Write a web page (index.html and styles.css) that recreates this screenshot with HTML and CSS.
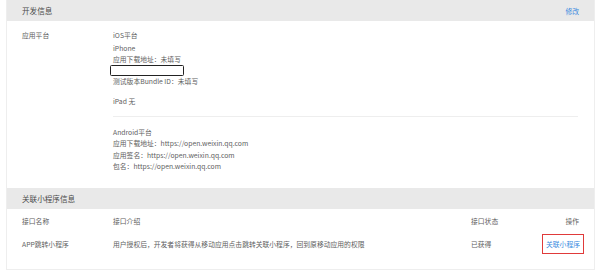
FILE: index.html
```html
<!DOCTYPE html>
<html lang="zh-CN">
<head>
<meta charset="utf-8">
<title>开发信息</title>
<link rel="stylesheet" href="styles.css">
</head>
<body>
<div class="card">
  <div class="section-head">
    <span class="section-title">开发信息</span>
    <a class="link">修改</a>
  </div>
  <div class="dev-body">
    <div class="label">应用平台</div>
    <div class="platforms">
      <div class="ios">
        <div class="line">iOS平台</div>
        <div class="line gap2">iPhone</div>
        <div class="line">应用下载地址：未填写</div>
        <div class="redact"></div>
        <div class="line">测试版本Bundle ID：未填写</div>
        <div class="line ipad">iPad 无</div>
      </div>
      <div class="divider"></div>
      <div class="android">
        <div class="line">Android平台</div>
        <div class="line tight">应用下载地址：https://open.weixin.qq.com</div>
        <div class="line tight">应用签名：https://open.weixin.qq.com</div>
        <div class="line tight">包名：https://open.weixin.qq.com</div>
      </div>
    </div>
  </div>
  <div class="section-head">
    <span class="section-title">关联小程序信息</span>
  </div>
  <div class="table">
    <div class="row head">
      <div>接口名称</div>
      <div>接口介绍</div>
      <div>接口状态</div>
      <div class="act">操作</div>
    </div>
    <div class="row">
      <div>APP跳转小程序</div>
      <div>用户授权后，开发者将获得从移动应用点击跳转关联小程序，回到原移动应用的权限</div>
      <div>已获得</div>
      <div class="act"><a class="link boxed">关联小程序</a></div>
    </div>
  </div>
</div>
</body>
</html>
```

FILE: styles.css
```css
html, body {
  margin: 0;
  padding: 0;
  background: #ffffff;
}
body {
  font-family: "Noto Sans CJK SC", "Noto Sans", sans-serif;
  font-size: 6.8px;
  color: #606060;
  width: 600px;
  height: 273px;
  overflow: hidden;
}
.card {
  margin-left: 6px;
  width: 587px;
  border: 1px solid #eeeeee;
  border-top: none;
  padding-bottom: 14px;
}
.section-head {
  height: 21px;
  background: #e9e9e9;
  display: flex;
  align-items: center;
  justify-content: space-between;
  padding: 0 15px;
}
.section-title {
  font-size: 7.6px;
  color: #4a4a4a;
}
.link {
  color: #3b8be0;
  font-size: 6.8px;
}
.dev-body {
  display: grid;
  grid-template-columns: 91px 1fr;
  padding: 8px 15px 15px 15px;
}
.label {
  line-height: 11px;
  padding-top: 1px;
}
.line {
  line-height: 11px;
  white-space: nowrap;
}
.ios .line:first-child {
  padding-top: 1px;
}
.gap2 {
  margin-top: 2px;
}
.redact {
  margin-left: -3px;
  width: 72px;
  height: 9px;
  border: 1.5px solid #222222;
  border-radius: 1.5px;
  background: #ffffff;
}
.ipad {
  margin-top: 9px;
}
.divider {
  margin-top: 9px;
  height: 1px;
  background: #eeeeee;
  margin-right: 1px;
}
.android {
  margin-top: 10px;
}
.android .tight {
  line-height: 11.6px;
}
.table {
  padding: 0 15px;
}
.row {
  display: grid;
  grid-template-columns: 91px 358px 1fr auto;
  align-items: center;
  height: 22px;
}
.row.head {
  height: 23px;
  padding-top: 1px;
}
.act {
  text-align: right;
}
.boxed {
  display: inline-block;
  border: 1.5px solid #e03a3a;
  padding: 4px 3px 4px 3px;
  margin-right: -5px;
  line-height: 10px;
}
```
